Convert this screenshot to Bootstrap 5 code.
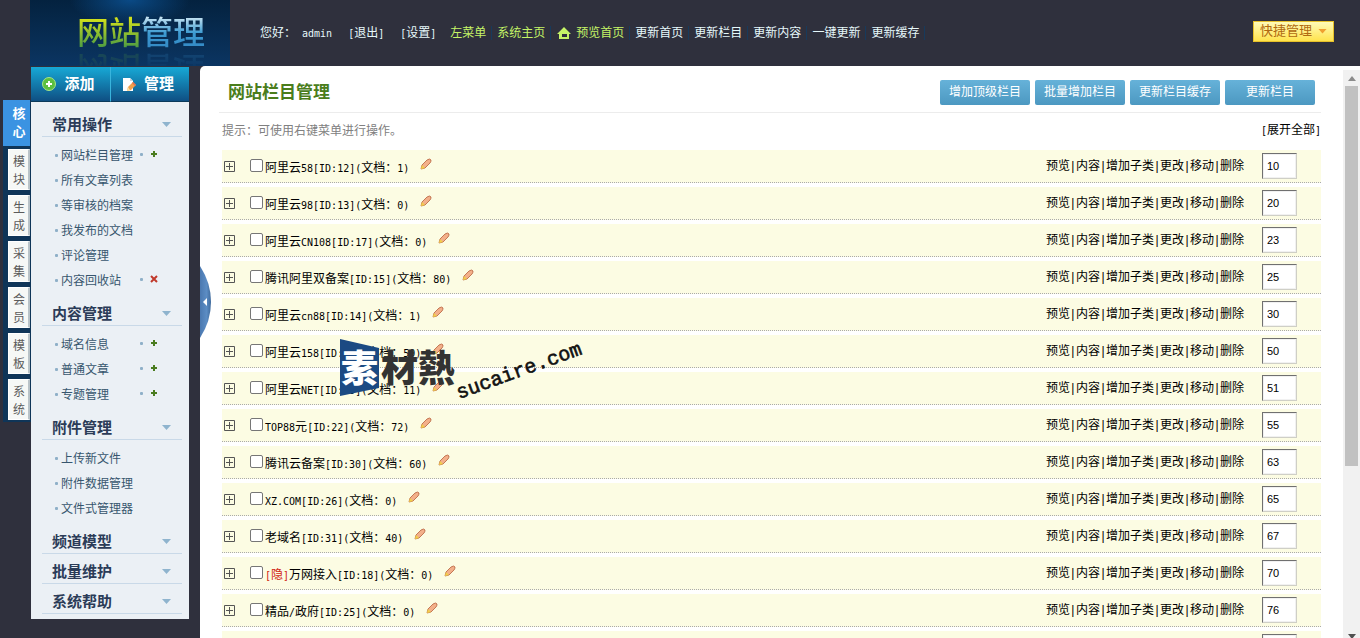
<!DOCTYPE html>
<html lang="zh-CN">
<head>
<meta charset="utf-8">
<meta name="viewport" content="width=device-width, initial-scale=1">
<title>网站栏目管理</title>
<link href="https://cdn.jsdelivr.net/npm/bootstrap@5.3.0/dist/css/bootstrap.min.css" rel="stylesheet">
<style>
body{background:#2f303d;font-family:"Liberation Sans","Noto Sans CJK SC",sans-serif;font-size:12px;line-height:18px;color:#000}
a{color:inherit;text-decoration:none}
.mono{font-family:"DejaVu Sans Mono","Noto Sans CJK SC",monospace;font-size:10px}
/* header */
.topbar{height:66px;padding-left:30px;color:#e6f8fb}
.logo{width:200px;height:66px;padding:10px 0 0 47px;font-size:32px;line-height:46px;font-weight:500;background:radial-gradient(ellipse 60px 26px at 50% 0,#0a4a86,transparent),linear-gradient(#04223f,#0b3562);overflow:hidden}
.logo span{height:46px;-webkit-background-clip:text;background-clip:text;color:transparent;-webkit-box-reflect:below -11px linear-gradient(transparent 50%,rgba(255,255,255,.35))}
.logo .green{background-image:linear-gradient(#cfdf1c 20%,#4f9d42 80%)}
.logo .blue{background-image:linear-gradient(#c8e4f2 15%,#3c9bd2 50%,#2f7fbd)}
.user{padding-left:30px;gap:16px}
.user-name{margin-left:6px}
.topnav{padding-left:9px}
.topnav a{padding:0 5px;border-right:1px solid #173a5c;line-height:14px}
.house{margin:0 5px 0 1px}
.lime{color:#c5f467}
.btn-quick{border:1px solid #e8c22a;border-radius:0;background:linear-gradient(#fffbb8,#ffe34d);color:#b06a10;width:81px;height:21px;padding:0 6px;font-size:13px;line-height:18px;margin:-4px 26px 0 auto}
.btn-quick .tri{background:#f0a030}
/* left side */
.rail{width:31px;padding:34px 0 0 3px}
.rail-tabs{background:#0f3558;padding-bottom:2px}
.rail a{display:block;text-align:center;width:22px;height:41px;margin:5px 0 0 5px;padding:3px 0 0 1px;background:#f6f8f6;border:1px solid #fff;border-right:2px solid #b9c3c8;color:#5b5b5b;line-height:18px}
.rail a.active{width:27px;height:46px;margin:0 0 -2px;padding:5px 0 0 5px;border:0;background:#3b93e2;color:#fff;font-weight:700;font-size:13px}
.side{width:158px;margin:1px 11px 0 0;background:#ebf0f5;height:fit-content;padding-bottom:5px}
.side-btn{width:79px;height:35px;border:0;border-radius:0;border-bottom:1px solid #0b3a5a;background:linear-gradient(#17a9d6,#0f4f83);color:#fff;font-weight:700;font-size:15px;padding:0 4px 0 0;gap:8px}
.side-btn+.side-btn{border-left:1px solid #39b4dc}
.side-menu{padding-top:5px}
.side-head{height:30px;margin:0 7px 0 11px;padding:6px 11px 0 10px;border-bottom:1px solid #c9d9e8;font-size:15px;line-height:23px;font-weight:700;color:#2b3c58}
.side-list{padding:6px 0 3px 24px;margin:0;color:#37566e}
.side-list li{height:25px}
.side-list a{width:79px}
.dot{width:3px;height:3px;background:#8fb0c8;border-radius:1px;margin-right:3px}
.side-list .add{margin:0 7px 3px 0}
.side-list .tool{width:auto;margin-bottom:3px}
.tri{width:9px;height:5px;background:#8fb4ce;clip-path:polygon(0 0,100% 0,50% 100%)}
/* content */
.panel-main{background:#fff;border-top-left-radius:5px;min-width:0}
.panel-body{padding:14px 22px 0;min-width:0}
.title-row{height:33px;margin-left:-3px;padding:0 6px 0 9px;border-bottom:1px solid #ececec}
.title-row h1{font-size:17px;line-height:26px;font-weight:700;color:#4a7d1c;margin:0}
.tools{gap:5px}
.btn-tool{width:90px;height:25px;border:0;border-radius:2px;background:linear-gradient(#66b2d9,#4c98c1);color:#fff;font-size:12px;line-height:22px;padding:0 0 2px}
.hint{height:37px;padding-bottom:2px;color:#808080}
.cat{height:33px;margin-bottom:4px;background:#fcfce3;border-bottom:1px dotted #aaa;padding:0 24px 0 2px}
.cat .form-check-input{width:13px;height:13px;margin:0 2px 2px 15px;border:1px solid #767676;border-radius:2px;background-color:#fff}
.cat label{padding-top:4px}
.hid{color:#d01c10}
.pencil{margin:0 0 5px 11px}
.acts{margin-right:18px}
.acts i{display:inline-block;width:6px;text-align:center;font-style:normal}
.order{width:35px;height:26px;border:1px solid #cfcfc6;border-top-color:#707070;border-left-color:#707070;padding:0 0 0 4px;border-radius:0;background:#fff;font-size:11px;box-shadow:inset 0 0 0 1px #f1f1f1}
.bar{width:17px;background:#f1f1f1;margin-top:4px;height:570px}
.bar-btn{height:16px}
.bar-thumb{width:13px;height:380px;background:#c1c1c1}
.handle{position:absolute;left:0;top:200px;width:11px;height:72px;border:0;padding:0;background:none}
.stamp{position:absolute;left:138px;top:266px;pointer-events:none}
</style>
</head>
<body class="vh-100 overflow-hidden d-flex flex-column">
<header class="topbar d-flex align-items-center flex-shrink-0">
  <div class="logo flex-shrink-0 d-flex align-items-start"><span class="green">网站</span><span class="blue">管理</span></div>
  <div class="user d-flex text-nowrap">
    <span>您好：<span class="mono user-name">admin</span></span>
    <a href="#"><span class="mono">[</span>退出<span class="mono">]</span></a>
    <a href="#"><span class="mono">[</span>设置<span class="mono">]</span></a>
  </div>
  <nav class="topnav d-flex text-nowrap">
    <a href="#" class="lime">左菜单</a><a href="#" class="lime">系统主页</a>
    <a href="#" class="lime d-flex align-items-center"><svg class="house" width="14" height="13" viewBox="0 0 14 13"><path fill="#c5f467" fill-rule="evenodd" d="M7 0 14 7h-2v5H2V7H0zM5 7v3h5V7z"/></svg>预览首页</a>
    <a href="#">更新首页</a><a href="#">更新栏目</a><a href="#">更新内容</a><a href="#">一键更新</a><a href="#">更新缓存</a>
  </nav>
  <button class="btn btn-quick d-flex align-items-center justify-content-between" type="button">快捷管理<span class="tri"></span></button>
</header>
<div class="d-flex flex-grow-1 overflow-hidden">
  <nav class="rail flex-shrink-0"><div class="rail-tabs">
    <a href="#" class="active">核<br>心</a><a href="#">模<br>块</a><a href="#">生<br>成</a><a href="#">采<br>集</a><a href="#">会<br>员</a><a href="#">模<br>板</a><a href="#">系<br>统</a>
  </div></nav>
  <aside class="side flex-shrink-0">
    <div class="d-flex">
      <button type="button" class="btn side-btn d-flex align-items-center justify-content-center"><svg width="14" height="14" viewBox="0 0 14 14"><circle cx="7" cy="7" r="6.5" fill="#5cbf3f" stroke="#a8e48a"/><path d="M7 4v6M4 7h6" stroke="#fff" stroke-width="2"/></svg>添加</button>
      <button type="button" class="btn side-btn d-flex align-items-center justify-content-center"><svg width="14" height="15" viewBox="0 0 14 15"><path d="M1 1h7l3 3v10H1z" fill="#fff"/><path d="M8 1v3h3" fill="#c9d6df"/><path d="m5 14 1-4 5-5 3 3-5 5z" fill="#f0a04b"/><path d="m11 5 3 3-1 1-3-3z" fill="#e06d55"/><path d="m5 14 1-4 2 3z" fill="#fbe3a5"/></svg>管理</button>
    </div>
    <div class="side-menu" id="menu"></div>
  </aside>
  <main class="panel-main flex-grow-1 d-flex position-relative overflow-hidden align-items-start">
    <div class="panel-body flex-grow-1">
      <div class="title-row d-flex justify-content-between align-items-start">
        <h1>网站栏目管理</h1>
        <div class="tools d-flex">
          <button type="button" class="btn btn-tool">增加顶级栏目</button><button type="button" class="btn btn-tool">批量增加栏目</button><button type="button" class="btn btn-tool">更新栏目缓存</button><button type="button" class="btn btn-tool">更新栏目</button>
        </div>
      </div>
      <div class="hint d-flex justify-content-between align-items-center"><span>提示：可使用右键菜单进行操作。</span><a href="#" class="text-black"><span class="mono">[</span>展开全部<span class="mono">]</span></a></div>
      <ul class="list-unstyled m-0" id="cats"></ul>
    </div>
    <div class="bar flex-shrink-0 d-flex flex-column align-items-center" aria-hidden="true">
      <div class="bar-btn d-flex align-items-center"><svg width="8" height="5"><path d="M0 5 4 0l4 5z" fill="#8b8b8b"/></svg></div>
      <div class="bar-thumb"></div>
      <div class="mt-auto d-flex"><svg width="8" height="6"><path d="M0 0h8L4 5z" fill="#505050"/></svg></div>
    </div>
    <button type="button" class="handle" aria-label="收起菜单"><svg class="d-block" width="11" height="72" viewBox="0 0 11 72"><defs><linearGradient id="hg"><stop offset="0" stop-color="#4a78b0"/><stop offset=".6" stop-color="#5c8dc4"/><stop offset="1" stop-color="#3f6a9c"/></linearGradient></defs><path d="M0 0q11 17 11 36T0 72z" fill="url(#hg)"/><path d="M7 32v8l-4-4z" fill="#fff"/></svg></button>
    <svg class="stamp" width="250" height="76" viewBox="0 0 250 76" font-family="Noto Sans CJK SC,sans-serif" font-weight="900">
      <path d="M2 7l39 9v40L2 64z" fill="#1b4a83"/>
      <text x="3" y="50" font-size="37" fill="#fff">素</text><text x="43" y="50" font-size="37" fill="#333">材熱</text>
      <text transform="translate(121 67) rotate(-20)" font-family="Liberation Mono,monospace" font-weight="400" font-size="20" fill="#111" stroke="#111" stroke-width=".6">sucaire.com</text>
    </svg>
  </main>
</div>
<script src="https://cdn.jsdelivr.net/npm/bootstrap@5.3.0/dist/js/bootstrap.bundle.min.js"></script>
<script>
// Side menu: [heading, [[item, icon]]]
const menu=[['常用操作',[['网站栏目管理','+'],['所有文章列表'],['等审核的档案'],['我发布的文档'],['评论管理'],['内容回收站','x']]],
['内容管理',[['域名信息','+'],['普通文章','+'],['专题管理','+']]],
['附件管理',[['上传新文件'],['附件数据管理'],['文件式管理器']]],['频道模型',[]],['批量维护',[]],['系统帮助',[]]];
const marks={'+':'<svg width="8" height="6"><path d="M4 0v6M1 3h6" stroke="#4a7c1f" stroke-width="2"/></svg>',
'x':'<svg width="8" height="8"><path d="m1 1 6 6M7 1 1 7" stroke="#c0392b" stroke-width="2"/></svg>'};
document.getElementById('menu').innerHTML=menu.map(([h,items])=>
`<h2 class="side-head d-flex align-items-center justify-content-between"><span>${h}</span><span class="tri"></span></h2>`+
(items.length?`<ul class="side-list list-unstyled">${items.map(([t,m])=>`<li class="d-flex align-items-center"><span class="dot"></span><a href="#">${t}</a>${m?`<span class="dot add"></span><a href="#" class="tool d-flex" aria-label="${t}">${marks[m]}</a>`:''}</li>`).join('')}</ul>`:'')).join('');
// Categories: [name, id, documents, order, hidden]
const cats=[['阿里云58',12,1,10],['阿里云98',13,0,20],['阿里云CN108',17,0,23],['腾讯阿里双备案',15,80,25],['阿里云cn88',14,1,30],['阿里云158',16,59,50],['阿里云NET',19,11,51],['TOP88元',22,72,55],['腾讯云备案',30,60,63],['XZ.COM',26,0,65],['老域名',31,40,67],['万网接入',18,0,70,1],['精品/政府',25,0,76],['',27,0,80]];
const mono=s=>s.replace(/[\x21-\x7e]+/g,m=>`<span class="mono">${m}</span>`);
const acts=['预览','内容','增加子类','更改','移动','删除'].map(a=>`<a href="#">${a}</a>`).join('<i>|</i>');
document.getElementById('cats').innerHTML=cats.map(([n,id,d,o,hid])=>
`<li class="cat d-flex align-items-center text-nowrap"><svg width="11" height="11"><path d="M.5.5h10v10H.5zM2 5.500h7M5.500 2v7" fill="none" stroke="#555"/></svg>
<input class="form-check-input" type="checkbox" id="c${id}"><label for="c${id}">${hid?'<span class="hid">'+mono('[隐]')+'</span>':''}${mono(n+'[ID:'+id+'](文档：'+d+')')}</label>
<a href="#" class="pencil d-flex" aria-label="编辑"><svg width="12" height="12" viewBox="0 0 12 12"><path d="M1 11l1-4 5-5q3-2 4 0 0 2-1 3l-5 5z" fill="#f3b08a" stroke="#b5603c" stroke-width=".8"/><path d="m1 11 1-4 3 3z" fill="#f2cf4a"/></svg></a>
<span class="acts ms-auto">${acts}</span><input class="order" type="text" value="${o}" aria-label="排序 ${n}"></li>`).join('');
</script>
</body>
</html>
